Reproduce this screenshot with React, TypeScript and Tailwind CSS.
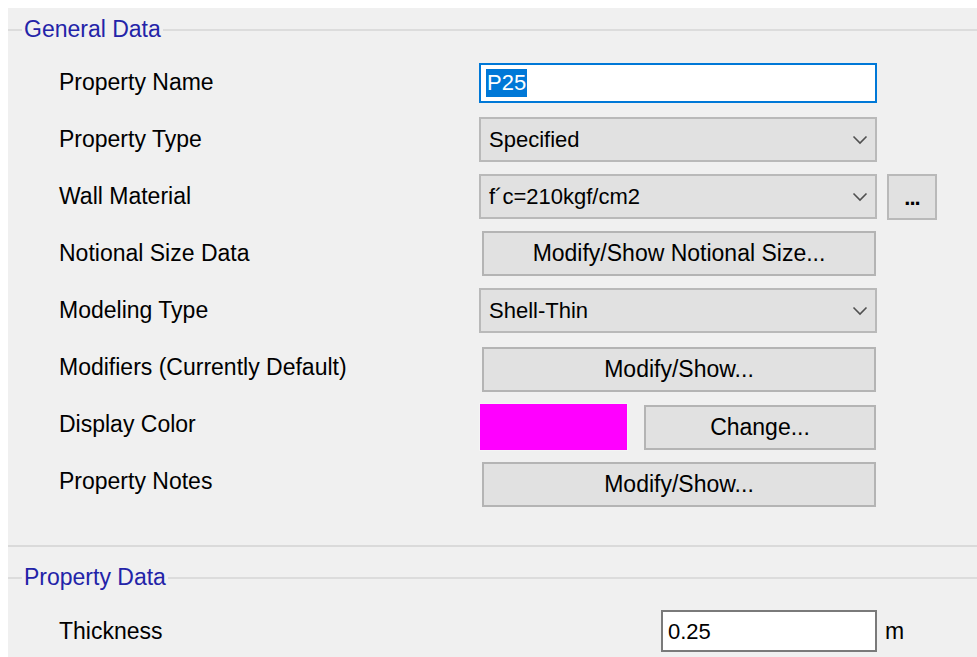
import React from "react";

const font = { fontFamily: '"Liberation Sans", Arial, sans-serif' };

function Chevron() {
  return (
    <svg width="16" height="10" viewBox="0 0 16 10" className="shrink-0">
      <path d="M1.5 1.5 L8 8 L14.5 1.5" fill="none" stroke="#505050" strokeWidth="1.6" />
    </svg>
  );
}

function Select({ value }: { value: string }) {
  return (
    <div className="flex h-[45px] w-[398px] items-center justify-between border-2 border-[#b9b9b9] bg-[#e1e1e1] pl-[8px] pr-[7px] text-[22px] text-black">
      <span>{value}</span>
      <Chevron />
    </div>
  );
}

function Button({ label, w }: { label: string; w: string }) {
  return (
    <div
      className={`flex h-[45px] ${w} items-center justify-center border-2 border-[#b4b4b4] bg-[#e1e1e1] text-[23px] text-black`}
    >
      {label}
    </div>
  );
}

function Row({ label, children }: { label: string; children: React.ReactNode }) {
  return (
    <div className="flex h-[57px] items-center">
      <div className="w-[471px] pl-[51px] text-[23px] leading-none text-black">{label}</div>
      <div className="flex items-center">{children}</div>
    </div>
  );
}

function Legend({ title }: { title: string }) {
  return (
    <div className="flex items-center">
      <div className="h-[2px] w-[14px] bg-[#dcdcdc]" />
      <span className="px-[2px] text-[23px] leading-none text-[#2323a8]">{title}</span>
      <div className="h-[2px] flex-1 bg-[#dcdcdc]" />
    </div>
  );
}

export default function App() {
  return (
    <div className="h-[657px] w-[977px] overflow-hidden bg-white pl-[8px] pt-[8px]" style={font}>
      <div className="flex h-[649px] flex-col bg-[#f0f0f0]">
        <div className="pt-[10px]">
          <Legend title="General Data" />
        </div>
        <div className="mt-[13px] flex flex-col">
          <Row label="Property Name">
            <div className="flex h-[40px] w-[398px] items-center border-2 border-[#0078d7] bg-white pl-[5px]">
              <span className="bg-[#0078d7] px-[1px] py-[3px] text-[22px] leading-none text-white">P25</span>
            </div>
          </Row>
          <Row label="Property Type">
            <Select value="Specified" />
          </Row>
          <Row label="Wall Material">
            <Select value="f´c=210kgf/cm2" />
            <div className="ml-[10px] flex h-[46px] w-[50px] items-end justify-center border-2 border-[#b9b9b9] bg-[#e1e1e1] pb-[9px] text-[22px] font-bold leading-none tracking-[-1px] text-black">
              ...
            </div>
          </Row>
          <Row label="Notional Size Data">
            <div className="pl-[3px]">
              <Button label="Modify/Show Notional Size..." w="w-[394px]" />
            </div>
          </Row>
          <Row label="Modeling Type">
            <Select value="Shell-Thin" />
          </Row>
          <Row label="Modifiers (Currently Default)">
            <div className="pl-[3px] pt-[4px]">
              <Button label="Modify/Show..." w="w-[394px]" />
            </div>
          </Row>
          <Row label="Display Color">
            <div className="flex items-center pt-[5px]">
              <div className="h-[48px] w-[149px] border border-[#f4f4f4] bg-[#ff00ff]" />
              <div className="ml-[16px]">
                <Button label="Change..." w="w-[232px]" />
              </div>
            </div>
          </Row>
          <Row label="Property Notes">
            <div className="pl-[3px] pt-[6px]">
              <Button label="Modify/Show..." w="w-[394px]" />
            </div>
          </Row>
        </div>
        <div className="mt-[35px] h-[2px] bg-[#dadada]" />
        <div className="mt-[19px]">
          <Legend title="Property Data" />
        </div>
        <div className="mt-[19px] flex h-[46px] items-center">
          <div className="w-[653px] pl-[51px] text-[23px] leading-none text-black">Thickness</div>
          <div className="flex h-[42px] w-[216px] items-center border-2 border-[#7a7a7a] bg-white pl-[5px] text-[22px] text-black">
            0.25
          </div>
          <span className="ml-[8px] text-[23px] text-black">m</span>
        </div>
      </div>
    </div>
  );
}
